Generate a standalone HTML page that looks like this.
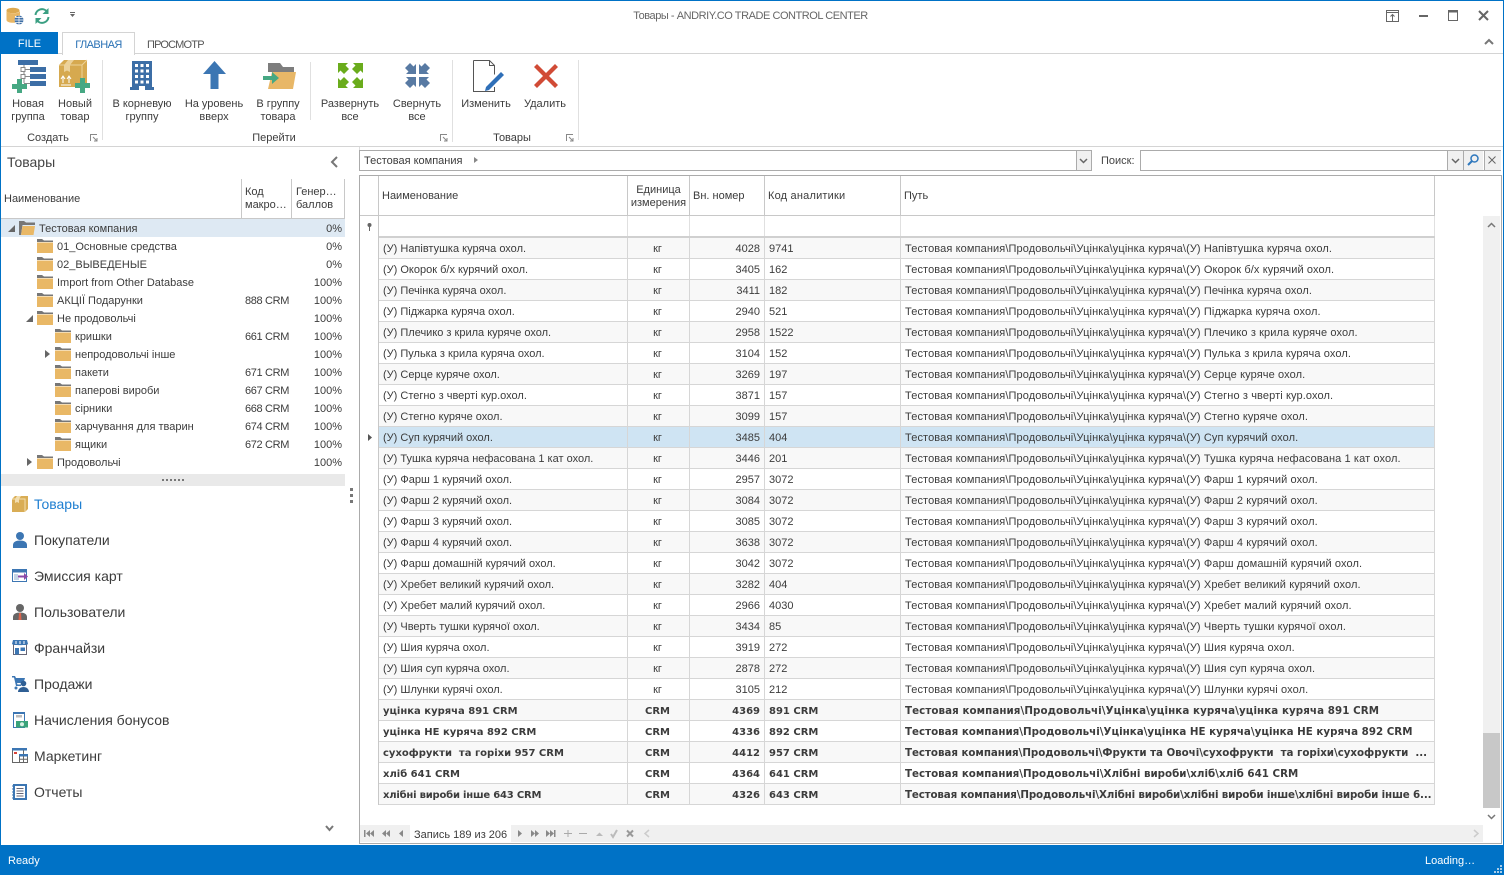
<!DOCTYPE html>
<html><head><meta charset="utf-8"><title>Товары</title>
<style>
html,body{margin:0;padding:0;width:1504px;height:875px;overflow:hidden;background:#fff}
body{font-family:"Liberation Sans",sans-serif;font-size:11px;color:#3c3c3c;position:relative}
.a{position:absolute;white-space:nowrap}
.c{text-align:center;line-height:13px}
.b{position:absolute}
svg{position:absolute;overflow:visible}
table{position:absolute;border-collapse:separate;border-spacing:0;table-layout:fixed;font-size:11px;color:#3c3c3c}
td{height:18px;padding:2px 4px 0;border-right:1px solid #d6d6d6;border-bottom:1px solid #d6d6d6;white-space:pre;overflow:hidden;line-height:18px}
tr:nth-child(odd) td{background:#f8f8f8}
tr.s td{background:#cfe4f3}
td:nth-child(2){text-align:center;padding-left:3px;padding-right:5px}
td:nth-child(3){text-align:right}
td:nth-child(5){letter-spacing:.11px}
tr.g td{font-weight:bold;font-family:"DejaVu Sans",sans-serif;font-size:10px;height:17px;padding-top:3px;line-height:17px}
tr.g td:nth-child(5){font-size:10.3px;letter-spacing:0;height:18px;padding-top:2px;line-height:18px}
.tr{position:absolute;left:0;width:344px;height:18px;line-height:20px}
.tr span{position:absolute;white-space:nowrap}
.p{right:2px}.k{left:245px;letter-spacing:-.35px}
.nav{position:absolute;left:34px;font-size:14px;line-height:18px;color:#3c3c3c;white-space:nowrap}
</style></head><body>

<!-- window frame -->
<div class="b" style="left:0;top:0;width:1504px;height:1px;background:#0072c6"></div>
<div class="b" style="left:0;top:0;width:1px;height:875px;background:#0072c6"></div>
<div class="b" style="right:0;top:0;width:1px;height:875px;background:#0072c6"></div>

<!-- QAT -->
<svg style="left:6px;top:7px" width="18" height="18" viewBox="0 0 18 18"><ellipse cx="7" cy="3.500" rx="6.500" ry="2.800" fill="#dda94f"/><path d="M.5 3.500V13c0 1.600 3 2.800 6.500 2.800h2V9h5V3.500c0 1.600-3 2.800-6.500 2.800S.5 5.100.5 3.500Z" fill="#e9b765"/><circle cx="13" cy="13" r="4.500" fill="#3f6fa5"/><path d="M8.500 13h9M13 8.500v9M9.500 10.500h7M9.500 15.500h7" stroke="#fff" stroke-width=".7"/></svg>
<svg style="left:33px;top:7px" width="18" height="18" viewBox="0 0 18 18" fill="none"><path d="M2.500 8A6.500 6.500 0 0 1 14 4.500" stroke="#3a9f82" stroke-width="2"/><path d="M15.500 1v6h-6z" fill="#3a9f82"/><path d="M15.500 10A6.500 6.500 0 0 1 4 13.500" stroke="#3a9f82" stroke-width="2"/><path d="M2.500 17v-6h6z" fill="#3a9f82"/></svg>
<svg style="left:69px;top:12px" width="8" height="7" viewBox="0 0 8 7"><path d="M1 0h5v1H1zM1 2h5L3.500 5z" fill="#666"/></svg>

<div class="a" style="left:0;width:1501px;top:9px;text-align:center;color:#666;line-height:14px;letter-spacing:-.45px">Товары - ANDRIY.CO TRADE CONTROL CENTER</div>

<!-- window buttons -->
<svg style="left:1386px;top:10px" width="13" height="12" viewBox="0 0 13 12" fill="none"><rect x=".5" y=".5" width="12" height="11" stroke="#666"/><path d="M.5 2.500h12" stroke="#666"/><path d="M6.500 11V5M4.500 6.500l2-2 2 2" stroke="#666"/></svg>
<div class="b" style="left:1419px;top:15px;width:9px;height:2px;background:#666"></div>
<svg style="left:1448px;top:10px" width="10" height="11" viewBox="0 0 10 11" fill="none"><rect x=".5" y=".5" width="9" height="10" stroke="#666"/><rect x="0" y="0" width="10" height="2.500" fill="#666"/></svg>
<svg style="left:1478px;top:10px" width="11" height="11" viewBox="0 0 11 11"><path d="M1 1l9 9M10 1l-9 9" stroke="#666" stroke-width="2"/></svg>

<!-- tabs -->
<div class="b" style="left:1px;top:32px;width:57px;height:22px;background:#0072c6"></div>
<div class="a" style="left:1px;width:57px;top:37px;text-align:center;color:#fff;line-height:14px">FILE</div>
<div class="b" style="left:134px;top:53px;width:1369px;height:1px;background:#d4d4d4"></div>
<div class="b" style="left:58px;top:53px;width:4px;height:1px;background:#d4d4d4"></div>
<div class="b" style="left:62px;top:32px;width:71px;height:22px;border:1px solid #d4d4d4;border-bottom:none;background:#fff"></div>
<div class="a" style="left:62px;width:73px;top:38px;text-align:center;color:#2a72b5;line-height:14px;letter-spacing:-.55px">ГЛАВНАЯ</div>
<div class="a" style="left:147px;top:38px;color:#555;line-height:14px;letter-spacing:-.8px">ПРОСМОТР</div>
<svg style="left:1484px;top:38px" width="10" height="7" viewBox="0 0 10 7" fill="none"><path d="M1 6l4-4 4 4" stroke="#777" stroke-width="2"/></svg>

<!-- ribbon -->
<div class="b" style="left:1px;top:146px;width:1502px;height:1px;background:#d4d4d4"></div>
<div class="b" style="left:102px;top:60px;width:1px;height:80px;background:#e0e0e0"></div>
<div class="b" style="left:310px;top:62px;width:1px;height:58px;background:#e0e0e0"></div>
<div class="b" style="left:452px;top:60px;width:1px;height:82px;background:#e0e0e0"></div>
<div class="b" style="left:578px;top:60px;width:1px;height:80px;background:#e0e0e0"></div>

<!-- icon: new group -->
<svg style="left:11px;top:59px" width="36" height="34" viewBox="0 0 36 34"><rect x="7" y="1" width="20" height="5" fill="#3c6ea6"/><rect x="19" y="8" width="16" height="5" fill="#3c6ea6"/><rect x="19" y="15" width="16" height="5" fill="#3c6ea6"/><rect x="19" y="22" width="16" height="5" fill="#3c6ea6"/><path d="M13 6v18M13 10.500h6M13 17.500h6M13 24.500h6" stroke="#888" fill="none"/><rect x="10" y="8.500" width="4" height="4" fill="#fff" stroke="#888"/><rect x="10" y="15.500" width="4" height="4" fill="#fff" stroke="#888"/><path d="M6 20h5v5h5v5h-5v4H6v-4H1v-5h5z" fill="#46a883"/></svg>
<!-- icon: new product -->
<svg style="left:58px;top:59px" width="34" height="34" viewBox="0 0 34 34"><path d="M1 6l5-5h23v23l-5 4H1z" fill="#d6a94f"/><path d="M1 6h23v22" fill="none" stroke="#ecd29a"/><path d="M24 6l5-5" stroke="#ecd29a"/><path d="M10 1h6l-4 5v7l-3-1.500L6 13V6z" fill="#ecd29a"/><path d="M5 24v-6M3 20l2-3 2 3M11 24v-6M9 20l2-3 2 3M3 26h10" stroke="#fff" fill="none"/><path d="M22 19h5v5h5v5h-5v5h-5v-5h-5v-5h5z" fill="#46a883"/></svg>
<!-- icon: building -->
<svg style="left:130px;top:60px" width="24" height="30" viewBox="0 0 24 30"><path d="M2 1h20v26h2v3H0v-3h2z" fill="#3c6ea6"/><path d="M5 4h3v3H5zM10.500 4h3v3h-3zM16 4h3v3h-3zM5 9.500h3v3H5zM10.500 9.500h3v3h-3zM16 9.500h3v3h-3zM5 15h3v3H5zM10.500 15h3v3h-3zM16 15h3v3h-3zM5 20.500h3v3H5zM10.500 20.500h3v3h-3zM16 20.500h3v3h-3zM9 26h6v4H9z" fill="#fff"/></svg>
<!-- icon: up -->
<svg style="left:203px;top:61px" width="23" height="28" viewBox="0 0 23 28"><path d="M11.500 0L23 13h-7.500v15h-8V13H0z" fill="#3c76b3"/></svg>
<!-- icon: to group -->
<svg style="left:263px;top:63px" width="33" height="26" viewBox="0 0 33 26"><path d="M5 0h12l3 4h11v5H5z" fill="#7d7d7d"/><path d="M9 9h24l-3 17H5z" fill="#e8b767"/><path d="M0 13h9V9l7 6-7 6v-4H0z" fill="#46a883"/></svg>
<!-- expand -->
<svg style="left:338px;top:63px" width="25" height="25" viewBox="0 0 25 25" fill="#6aac1c"><path d="M0 0h10L7.500 2.500 11 6l-5 5-3.500-3.500L0 10zM25 0v10l-2.500-2.500L19 11l-5-5 3.500-3.500L15 0zM0 25V15l2.500 2.500L6 14l5 5-3.500 3.500L10 25zM25 25H15l2.500-2.500L14 19l5-5 3.500 3.500L25 15z"/></svg>
<!-- collapse -->
<svg style="left:405px;top:63px" width="25" height="25" viewBox="0 0 25 25" fill="#587aa3"><path d="M11 11H1l2.500-2.500L0 5l5-5 3.500 3.500L11 1zM14 11V1l2.500 2.500L20 0l5 5-3.500 3.500L24 11zM11 14v10l-2.500-2.500L5 25l-5-5 3.500-3.500L1 14zM14 14h10l-2.500 2.500L25 20l-5 5-3.500-3.500L14 24z"/></svg>
<!-- edit -->
<svg style="left:473px;top:60px" width="32" height="32" viewBox="0 0 32 32"><path d="M.5.500h16l5 5v9M21.500 27v4.500H.5V.5M16.500.5v5h5" fill="none" stroke="#555"/><path d="M28 12l3 3-15 15-4 1 1-4z" fill="#2f6fb8"/></svg>
<!-- delete -->
<svg style="left:534px;top:64px" width="24" height="24" viewBox="0 0 24 24"><path d="M3 0l9 9 9-9 3 3-9 9 9 9-3 3-9-9-9 9-3-3 9-9-9-9z" fill="#d14b36"/></svg>

<div class="a c" style="left:3px;width:50px;top:98px">Новая<br>группа</div>
<div class="a c" style="left:50px;width:50px;top:98px">Новый<br>товар</div>
<div class="a c" style="left:106px;width:72px;top:98px">В корневую<br>группу</div>
<div class="a c" style="left:178px;width:72px;top:98px">На уровень<br>вверх</div>
<div class="a c" style="left:248px;width:60px;top:98px">В группу<br>товара</div>
<div class="a c" style="left:314px;width:72px;top:98px">Развернуть<br>все</div>
<div class="a c" style="left:384px;width:66px;top:98px">Свернуть<br>все</div>
<div class="a c" style="left:456px;width:60px;top:98px">Изменить</div>
<div class="a c" style="left:515px;width:60px;top:98px">Удалить</div>
<div class="a c" style="left:18px;width:60px;top:132px">Создать</div>
<div class="a c" style="left:244px;width:60px;top:132px">Перейти</div>
<div class="a c" style="left:482px;width:60px;top:132px">Товары</div>
<svg style="left:90px;top:134px" width="8" height="8" viewBox="0 0 8 8" fill="none" stroke="#888"><path d="M.5 7V.5H7M3 3l4 4M7 4v3H4"/></svg>
<svg style="left:440px;top:134px" width="8" height="8" viewBox="0 0 8 8" fill="none" stroke="#888"><path d="M.5 7V.5H7M3 3l4 4M7 4v3H4"/></svg>
<svg style="left:566px;top:134px" width="8" height="8" viewBox="0 0 8 8" fill="none" stroke="#888"><path d="M.5 7V.5H7M3 3l4 4M7 4v3H4"/></svg>

<!-- left panel -->
<div class="a" style="left:7px;top:153px;font-size:14px;line-height:18px;color:#444">Товары</div>
<svg style="left:330px;top:156px" width="8" height="12" viewBox="0 0 8 12" fill="none"><path d="M7 1L2 6l5 5" stroke="#777" stroke-width="2"/></svg>
<div class="b" style="left:359px;top:147px;width:1px;height:5px;background:#ddd"></div>

<div class="a" style="left:4px;top:192px;line-height:14px">Наименование</div>
<div class="a" style="left:245px;top:186px;line-height:13px">Код<br>макро…</div>
<div class="a" style="left:296px;top:186px;line-height:13px">Генер…<br>баллов</div>
<div class="b" style="left:241px;top:179px;width:1px;height:39px;background:#c8c8c8"></div>
<div class="b" style="left:291px;top:179px;width:1px;height:39px;background:#c8c8c8"></div>
<div class="b" style="left:344px;top:179px;width:1px;height:39px;background:#c8c8c8"></div>
<div class="b" style="left:1px;top:218px;width:344px;height:1px;background:#c8c8c8"></div>

<div class="b" style="left:1px;top:219px;width:344px;height:18px;background:#dee9f3"></div>
<svg width="0" height="0"><defs><symbol id="f" viewBox="0 0 16 14"><path d="M0 0h5l2 1.500h9V3H0z" fill="#777"/><rect y="3.500" width="16" height="10.500" fill="#e9b866"/></symbol></defs></svg>

<div class="tr" style="top:219px"><svg style="left:8px;top:6px" width="7" height="7" viewBox="0 0 7 7"><path d="M7 0v7H0z" fill="#666"/></svg><svg style="left:19px;top:2px" width="16" height="14" viewBox="0 0 16 14"><path d="M0 14V0h5l2 1.500h9V4H3.500L2 14z" fill="#777"/><path d="M3.500 5H16l-1.500 9H2z" fill="#e9b866"/></svg><span style="left:39px">Тестовая компания</span><span class="p">0%</span></div>
<div class="tr" style="top:237px"><svg style="left:37px;top:2px" width="16" height="14"><use href="#f"/></svg><span style="left:57px">01_Основные средства</span><span class="p">0%</span></div>
<div class="tr" style="top:255px"><svg style="left:37px;top:2px" width="16" height="14"><use href="#f"/></svg><span style="left:57px">02_ВЫВЕДЕНЫЕ</span><span class="p">0%</span></div>
<div class="tr" style="top:273px"><svg style="left:37px;top:2px" width="16" height="14"><use href="#f"/></svg><span style="left:57px">Import from Other Database</span><span class="p">100%</span></div>
<div class="tr" style="top:291px"><svg style="left:37px;top:2px" width="16" height="14"><use href="#f"/></svg><span style="left:57px">АКЦІЇ Подарунки</span><span class="k">888 CRM</span><span class="p">100%</span></div>
<div class="tr" style="top:309px"><svg style="left:26px;top:6px" width="7" height="7" viewBox="0 0 7 7"><path d="M7 0v7H0z" fill="#666"/></svg><svg style="left:37px;top:2px" width="16" height="14"><use href="#f"/></svg><span style="left:57px">Не продовольчі</span><span class="p">100%</span></div>
<div class="tr" style="top:327px"><svg style="left:55px;top:2px" width="16" height="14"><use href="#f"/></svg><span style="left:75px">кришки</span><span class="k">661 CRM</span><span class="p">100%</span></div>
<div class="tr" style="top:345px"><svg style="left:45px;top:5px" width="5" height="8" viewBox="0 0 5 8"><path d="M0 0l5 4-5 4z" fill="#666"/></svg><svg style="left:55px;top:2px" width="16" height="14"><use href="#f"/></svg><span style="left:75px">непродовольчі інше</span><span class="p">100%</span></div>
<div class="tr" style="top:363px"><svg style="left:55px;top:2px" width="16" height="14"><use href="#f"/></svg><span style="left:75px">пакети</span><span class="k">671 CRM</span><span class="p">100%</span></div>
<div class="tr" style="top:381px"><svg style="left:55px;top:2px" width="16" height="14"><use href="#f"/></svg><span style="left:75px">паперові вироби</span><span class="k">667 CRM</span><span class="p">100%</span></div>
<div class="tr" style="top:399px"><svg style="left:55px;top:2px" width="16" height="14"><use href="#f"/></svg><span style="left:75px">сірники</span><span class="k">668 CRM</span><span class="p">100%</span></div>
<div class="tr" style="top:417px"><svg style="left:55px;top:2px" width="16" height="14"><use href="#f"/></svg><span style="left:75px">харчування для тварин</span><span class="k">674 CRM</span><span class="p">100%</span></div>
<div class="tr" style="top:435px"><svg style="left:55px;top:2px" width="16" height="14"><use href="#f"/></svg><span style="left:75px">ящики</span><span class="k">672 CRM</span><span class="p">100%</span></div>
<div class="tr" style="top:453px"><svg style="left:27px;top:5px" width="5" height="8" viewBox="0 0 5 8"><path d="M0 0l5 4-5 4z" fill="#666"/></svg><svg style="left:37px;top:2px" width="16" height="14"><use href="#f"/></svg><span style="left:57px">Продовольчі</span><span class="p">100%</span></div>

<div class="b" style="left:1px;top:474px;width:344px;height:12px;background:#e9e9e9"></div>
<svg style="left:162px;top:479px" width="22" height="2"><path d="M0 0h2v2H0zM4 0h2v2H4zM8 0h2v2H8zM12 0h2v2h-2zM16 0h2v2h-2zM20 0h2v2h-2z" fill="#777"/></svg>
<svg style="left:350px;top:488px" width="3" height="16"><path d="M0 0h3v3H0zM0 6h3v3H0zM0 12h3v3H0z" fill="#777"/></svg>

<!-- nav icons -->
<svg style="left:12px;top:496px" width="16" height="16" viewBox="0 0 16 16"><path d="M0 3l3-3h13v13l-3 3H0z" fill="#d9ad55"/><path d="M0 3h13v13" fill="none" stroke="#f2deb0"/><path d="M5 0h4L7 3v4L5 6 3 7V3z" fill="#f2deb0"/></svg>
<svg style="left:13px;top:532px" width="14" height="16" viewBox="0 0 14 16" fill="#3c76b3"><circle cx="7" cy="4" r="4"/><path d="M0 16v-3c0-3 3-4.500 7-4.500s7 1.500 7 4.500v3z"/></svg>
<svg style="left:12px;top:569px" width="16" height="13" viewBox="0 0 16 13"><rect x=".5" y=".5" width="14" height="12" fill="#fff" stroke="#3c76b3"/><path d="M0 0h15v3.500H0z" fill="#3c76b3"/><path d="M2 6h4M2 8h4M2 10h5" stroke="#8aa9cc"/><path d="M6 6.500h6V4l4 3.500-4 3.500V8.500H6z" fill="#8a4aa8"/></svg>
<svg style="left:13px;top:604px" width="14" height="16" viewBox="0 0 14 16"><circle cx="7" cy="4" r="4" fill="#666"/><path d="M0 16v-3c0-3 3-4.500 7-4.500s7 1.500 7 4.500v3z" fill="#666"/><path d="M6 9h2l.5 7h-3z" fill="#d9634c"/></svg>
<svg style="left:12px;top:640px" width="16" height="15" viewBox="0 0 16 15"><rect x="1.500" y="4.500" width="13" height="10" fill="#fff" stroke="#667"/><path d="M1 0h14l1 4c0 1.500-16 1.500-16 0z" fill="#3c76b3"/><path d="M4 1v3M8 1v3M12 1v3" stroke="#fff"/><rect x="3" y="8" width="4" height="6.500" fill="#3c76b3"/><rect x="8.500" y="7.500" width="4.500" height="3.500" fill="#3c76b3"/></svg>
<svg style="left:12px;top:676px" width="17" height="16" viewBox="0 0 17 16" fill="#3c76b3"><path d="M0 0h3l1 2h9l-1.500 5H5l.5 1.500H9V10H4L2 1.500H0z"/><circle cx="4" cy="12" r="1.500"/><circle cx="11.500" cy="7.500" r="2.800" fill="#2f5f94"/><path d="M6 16c0-3 2.500-5 5.500-5s5.500 2 5.500 5z" fill="#2f5f94"/></svg>
<svg style="left:13px;top:712px" width="15" height="16" viewBox="0 0 15 16"><rect x=".5" y=".5" width="11" height="15" fill="#fff" stroke="#3c76b3"/><rect x="0" y="0" width="12" height="2" fill="#3c76b3"/><rect x="3" y="3" width="6" height="2.500" fill="#bbb"/><rect x="3" y="9" width="12" height="6.500" fill="#3aa37a"/><circle cx="9" cy="12.200" r="2" fill="#d8f0e4"/></svg>
<svg style="left:12px;top:748px" width="16" height="15" viewBox="0 0 16 15"><rect x=".5" y=".5" width="11" height="14" fill="#fff" stroke="#666"/><rect x="0" y="0" width="15" height="2.500" fill="#3c76b3"/><rect x="2" y="4" width="3" height="2" fill="#d9443a"/><rect x="7.500" y="6.500" width="8" height="8" fill="#fff" stroke="#666"/><rect x="7" y="6" width="9" height="2.500" fill="#3c76b3"/><path d="M11.500 8v6M8 11.200h7" stroke="#666"/></svg>
<svg style="left:12px;top:784px" width="15" height="16" viewBox="0 0 15 16"><rect x="1" y="0" width="14" height="16" fill="#3c76b3"/><rect x="3" y="2" width="10" height="12" fill="#fff"/><path d="M4.500 4.500h7M4.500 7h7M4.500 9.500h7M4.500 12h7" stroke="#667"/><path d="M0 2h2M0 5h2M0 8h2M0 11h2M0 14h2" stroke="#3c76b3"/></svg>

<div class="nav" style="top:495px;color:#1f7fd1">Товары</div>
<div class="nav" style="top:531px">Покупатели</div>
<div class="nav" style="top:567px">Эмиссия карт</div>
<div class="nav" style="top:603px">Пользователи</div>
<div class="nav" style="top:639px">Франчайзи</div>
<div class="nav" style="top:675px">Продажи</div>
<div class="nav" style="top:711px">Начисления бонусов</div>
<div class="nav" style="top:747px">Маркетинг</div>
<div class="nav" style="top:783px">Отчеты</div>
<svg style="left:325px;top:825px" width="9" height="7" viewBox="0 0 9 7" fill="none"><path d="M1 1l3.500 4L8 1" stroke="#777" stroke-width="2"/></svg>

<!-- top bar -->
<div class="b" style="left:359px;top:150px;width:731px;height:19px;border:1px solid #ababab;background:#fff"></div>
<div class="a" style="left:364px;top:154px;line-height:14px">Тестовая компания</div>
<svg style="left:474px;top:157px" width="4" height="6"><path d="M0 0l4 3-4 3z" fill="#888"/></svg>
<div class="b" style="left:1076px;top:151px;width:14px;height:19px;background:#f0f0f0;border-left:1px solid #ababab"></div>
<svg style="left:1079px;top:158px" width="9" height="6" viewBox="0 0 9 6" fill="none"><path d="M1 1l3.500 3.500L8 1" stroke="#666" stroke-width="1.500"/></svg>
<div class="a" style="left:1101px;top:154px;line-height:14px;color:#444">Поиск:</div>
<div class="b" style="left:1140px;top:150px;width:359px;height:19px;border:1px solid #ababab;background:#fff"></div>
<div class="b" style="left:1447px;top:151px;width:15px;height:19px;background:#f0f0f0;border-left:1px solid #ababab"></div>
<div class="b" style="left:1463px;top:151px;width:19px;height:19px;background:#f0f0f0;border-left:1px solid #ababab"></div>
<div class="b" style="left:1484px;top:151px;width:16px;height:19px;background:#f0f0f0;border-left:1px solid #ababab"></div>
<svg style="left:1451px;top:158px" width="9" height="6" viewBox="0 0 9 6" fill="none"><path d="M1 1l3.500 3.500L8 1" stroke="#666" stroke-width="1.500"/></svg>
<svg style="left:1467px;top:154px" width="12" height="12" viewBox="0 0 12 12" fill="none"><circle cx="7.500" cy="4.500" r="3.500" stroke="#2f78bd" stroke-width="1.500"/><path d="M5 7l-4 4" stroke="#2f78bd" stroke-width="2"/></svg>
<svg style="left:1488px;top:156px" width="8" height="8" viewBox="0 0 8 8"><path d="M.5.500l7 7M7.500.5l-7 7" stroke="#666"/></svg>

<!-- grid frame -->
<div class="b" style="left:359px;top:175px;width:1141px;height:667px;border:1px solid #ababab;background:#fff"></div>
<!-- grid header -->
<div class="b" style="left:378px;top:176px;width:1px;height:629px;background:#c8c8c8"></div>
<div class="b" style="left:360px;top:215px;width:1075px;height:1px;background:#c8c8c8"></div>
<div class="b" style="left:627px;top:176px;width:1px;height:39px;background:#c8c8c8"></div>
<div class="b" style="left:689px;top:176px;width:1px;height:39px;background:#c8c8c8"></div>
<div class="b" style="left:764px;top:176px;width:1px;height:39px;background:#c8c8c8"></div>
<div class="b" style="left:900px;top:176px;width:1px;height:39px;background:#c8c8c8"></div>
<div class="b" style="left:1434px;top:176px;width:1px;height:39px;background:#c8c8c8"></div>
<div class="a" style="left:382px;top:189px;line-height:14px">Наименование</div>
<div class="a c" style="left:628px;width:61px;top:184px">Единица<br>измерения</div>
<div class="a" style="left:693px;top:189px;line-height:14px">Вн. номер</div>
<div class="a" style="left:768px;top:189px;line-height:14px;letter-spacing:.2px">Код аналитики</div>
<div class="a" style="left:904px;top:189px;line-height:14px">Путь</div>
<!-- filter row -->
<div class="b" style="left:627px;top:216px;width:1px;height:20px;background:#e0e0e0"></div>
<div class="b" style="left:689px;top:216px;width:1px;height:20px;background:#e0e0e0"></div>
<div class="b" style="left:764px;top:216px;width:1px;height:20px;background:#e0e0e0"></div>
<div class="b" style="left:900px;top:216px;width:1px;height:20px;background:#e0e0e0"></div>
<div class="b" style="left:1434px;top:216px;width:1px;height:20px;background:#e0e0e0"></div>
<div class="b" style="left:379px;top:236px;width:1056px;height:2px;background:#d0d0d0"></div>
<svg style="left:367px;top:223px" width="5" height="8" viewBox="0 0 5 8"><circle cx="2.500" cy="2" r="2" fill="#666"/><path d="M2.500 3v5" stroke="#666"/></svg>
<svg style="left:368px;top:434px" width="4" height="7"><path d="M0 0l4 3.500L0 7z" fill="#555"/></svg>

<table style="left:379px;top:238px;width:1056px">
<colgroup><col style="width:249px"><col style="width:62px"><col style="width:75px"><col style="width:136px"><col style="width:534px"></colgroup>
<tr><td>(У) Напівтушка куряча охол.</td><td>кг</td><td>4028</td><td>9741</td><td>Тестовая компания\Продовольчі\Уцінка\уцінка куряча\(У) Напівтушка куряча охол.</td></tr>
<tr><td>(У) Окорок б/х курячий охол.</td><td>кг</td><td>3405</td><td>162</td><td>Тестовая компания\Продовольчі\Уцінка\уцінка куряча\(У) Окорок б/х курячий охол.</td></tr>
<tr><td>(У) Печінка куряча охол.</td><td>кг</td><td>3411</td><td>182</td><td>Тестовая компания\Продовольчі\Уцінка\уцінка куряча\(У) Печінка куряча охол.</td></tr>
<tr><td>(У) Піджарка куряча охол.</td><td>кг</td><td>2940</td><td>521</td><td>Тестовая компания\Продовольчі\Уцінка\уцінка куряча\(У) Піджарка куряча охол.</td></tr>
<tr><td>(У) Плечико з крила куряче охол.</td><td>кг</td><td>2958</td><td>1522</td><td>Тестовая компания\Продовольчі\Уцінка\уцінка куряча\(У) Плечико з крила куряче охол.</td></tr>
<tr><td>(У) Пулька з крила куряча охол.</td><td>кг</td><td>3104</td><td>152</td><td>Тестовая компания\Продовольчі\Уцінка\уцінка куряча\(У) Пулька з крила куряча охол.</td></tr>
<tr><td>(У) Серце куряче охол.</td><td>кг</td><td>3269</td><td>197</td><td>Тестовая компания\Продовольчі\Уцінка\уцінка куряча\(У) Серце куряче охол.</td></tr>
<tr><td>(У) Стегно з чверті кур.охол.</td><td>кг</td><td>3871</td><td>157</td><td>Тестовая компания\Продовольчі\Уцінка\уцінка куряча\(У) Стегно з чверті кур.охол.</td></tr>
<tr><td>(У) Стегно куряче охол.</td><td>кг</td><td>3099</td><td>157</td><td>Тестовая компания\Продовольчі\Уцінка\уцінка куряча\(У) Стегно куряче охол.</td></tr>
<tr class="s"><td>(У) Суп курячий охол.</td><td>кг</td><td>3485</td><td>404</td><td>Тестовая компания\Продовольчі\Уцінка\уцінка куряча\(У) Суп курячий охол.</td></tr>
<tr><td>(У) Тушка куряча нефасована 1 кат охол.</td><td>кг</td><td>3446</td><td>201</td><td>Тестовая компания\Продовольчі\Уцінка\уцінка куряча\(У) Тушка куряча нефасована 1 кат охол.</td></tr>
<tr><td>(У) Фарш 1 курячий охол.</td><td>кг</td><td>2957</td><td>3072</td><td>Тестовая компания\Продовольчі\Уцінка\уцінка куряча\(У) Фарш 1 курячий охол.</td></tr>
<tr><td>(У) Фарш 2 курячий охол.</td><td>кг</td><td>3084</td><td>3072</td><td>Тестовая компания\Продовольчі\Уцінка\уцінка куряча\(У) Фарш 2 курячий охол.</td></tr>
<tr><td>(У) Фарш 3 курячий охол.</td><td>кг</td><td>3085</td><td>3072</td><td>Тестовая компания\Продовольчі\Уцінка\уцінка куряча\(У) Фарш 3 курячий охол.</td></tr>
<tr><td>(У) Фарш 4 курячий охол.</td><td>кг</td><td>3638</td><td>3072</td><td>Тестовая компания\Продовольчі\Уцінка\уцінка куряча\(У) Фарш 4 курячий охол.</td></tr>
<tr><td>(У) Фарш домашній курячий охол.</td><td>кг</td><td>3042</td><td>3072</td><td>Тестовая компания\Продовольчі\Уцінка\уцінка куряча\(У) Фарш домашній курячий охол.</td></tr>
<tr><td>(У) Хребет великий курячий охол.</td><td>кг</td><td>3282</td><td>404</td><td>Тестовая компания\Продовольчі\Уцінка\уцінка куряча\(У) Хребет великий курячий охол.</td></tr>
<tr><td>(У) Хребет малий курячий охол.</td><td>кг</td><td>2966</td><td>4030</td><td>Тестовая компания\Продовольчі\Уцінка\уцінка куряча\(У) Хребет малий курячий охол.</td></tr>
<tr><td>(У) Чверть тушки курячої охол.</td><td>кг</td><td>3434</td><td>85</td><td>Тестовая компания\Продовольчі\Уцінка\уцінка куряча\(У) Чверть тушки курячої охол.</td></tr>
<tr><td>(У) Шия куряча охол.</td><td>кг</td><td>3919</td><td>272</td><td>Тестовая компания\Продовольчі\Уцінка\уцінка куряча\(У) Шия куряча охол.</td></tr>
<tr><td>(У) Шия суп куряча охол.</td><td>кг</td><td>2878</td><td>272</td><td>Тестовая компания\Продовольчі\Уцінка\уцінка куряча\(У) Шия суп куряча охол.</td></tr>
<tr><td>(У) Шлунки курячі охол.</td><td>кг</td><td>3105</td><td>212</td><td>Тестовая компания\Продовольчі\Уцінка\уцінка куряча\(У) Шлунки курячі охол.</td></tr>
<tr class="g"><td>уцінка куряча 891 CRM</td><td>CRM</td><td>4369</td><td>891 CRM</td><td style="letter-spacing:.07px">Тестовая компания\Продовольчі\Уцінка\уцінка куряча\уцінка куряча 891 CRM</td></tr>
<tr class="g"><td>уцінка НЕ куряча 892 CRM</td><td>CRM</td><td>4336</td><td>892 CRM</td><td>Тестовая компания\Продовольчі\Уцінка\уцінка НЕ куряча\уцінка НЕ куряча 892 CRM</td></tr>
<tr class="g"><td>сухофрукти  та горіхи 957 CRM</td><td>CRM</td><td>4412</td><td>957 CRM</td><td style="letter-spacing:-.04px">Тестовая компания\Продовольчі\Фрукти та Овочі\сухофрукти  та горіхи\сухофрукти  ...</td></tr>
<tr class="g"><td>хліб 641 CRM</td><td>CRM</td><td>4364</td><td>641 CRM</td><td>Тестовая компания\Продовольчі\Хлібні вироби\хліб\хліб 641 CRM</td></tr>
<tr class="g"><td style="letter-spacing:-.2px">хлібні вироби інше 643 CRM</td><td>CRM</td><td>4326</td><td>643 CRM</td><td style="letter-spacing:-.15px">Тестовая компания\Продовольчі\Хлібні вироби\хлібні вироби інше\хлібні вироби інше 6...</td></tr>
</table>

<!-- scrollbar -->
<div class="b" style="left:1483px;top:216px;width:17px;height:609px;background:#f0f0f0"></div>
<div class="b" style="left:1483px;top:733px;width:17px;height:75px;background:#c8c8c8"></div>
<div class="b" style="left:1483px;top:808px;width:17px;height:17px;background:#fff"></div>
<svg style="left:1487px;top:222px" width="9" height="6" viewBox="0 0 9 6" fill="none"><path d="M1 5l3.500-3.500L8 5" stroke="#777" stroke-width="1.500"/></svg>
<svg style="left:1487px;top:814px" width="9" height="6" viewBox="0 0 9 6" fill="none"><path d="M1 1l3.500 3.500L8 1" stroke="#777" stroke-width="1.500"/></svg>

<!-- bottom nav -->
<div class="b" style="left:360px;top:825px;width:1123px;height:17px;background:#f0f0f0"></div>
<div class="b" style="left:410px;top:825px;width:101px;height:17px;background:#fff"></div>
<div class="a" style="left:414px;top:828px;line-height:14px">Запись 189 из 206</div>
<svg style="left:364px;top:830px" width="285" height="8" viewBox="0 0 285 8" fill="#888">
<path d="M0 0h1.500v7H0zM6 0v7L2 3.500zM10 0v7L6 3.500z"/>
<path d="M22 0v7l-4-3.500zM26 0v7l-4-3.500z"/>
<path d="M39 0v7l-4-3.500z"/>
<path d="M154 0v7l4-3.500z"/>
<path d="M167 0v7l4-3.500zM171 0v7l4-3.500z"/>
<path d="M182 0v7l4-3.500zM186 0v7l4-3.500zM190 0h1.500v7H190z"/>
<path d="M200 3h8v1h-8zM203.500 0h1v7h-1zM215 3h8v1h-8z" fill="#aaa"/>
<path d="M232 6l3.500-3.500L239 6z" fill="#bbb"/>
<path d="M247 4l2 3 4-7" fill="none" stroke="#bbb" stroke-width="2"/>
<path d="M263 .5l6 6M269 .5l-6 6" fill="none" stroke="#999" stroke-width="2"/>
<path d="M285 0l-4 3.500 4 3.500" fill="none" stroke="#ccc" stroke-width="1.500"/></svg>
<svg style="left:1473px;top:829px" width="6" height="9" viewBox="0 0 6 9" fill="none"><path d="M1 1l4 3.500-4 3.500" stroke="#ccc" stroke-width="1.500"/></svg>

<!-- status bar -->
<div class="b" style="left:0;top:845px;width:1504px;height:30px;background:#0072c6"></div>
<div class="a" style="left:8px;top:854px;color:#fff;line-height:14px">Ready</div>
<div class="a" style="left:1425px;top:854px;color:#fff;line-height:14px">Loading…</div>
<svg style="left:1494px;top:865px" width="9" height="9"><path d="M6 0h2v2H6zM3 3h2v2H3zM6 3h2v2H6zM0 6h2v2H0zM3 6h2v2H3zM6 6h2v2H6z" fill="#a9cde8"/></svg>
</body></html>
